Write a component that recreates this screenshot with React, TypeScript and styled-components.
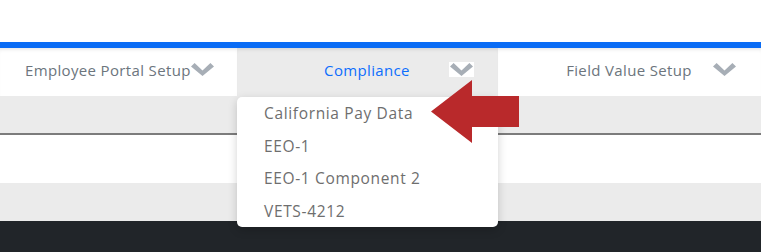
import React from 'react';
import styled, { createGlobalStyle } from 'styled-components';

const GlobalStyle = createGlobalStyle`
  html, body {
    margin: 0;
    padding: 0;
    background: #ffffff;
    font-family: "Open Sans", "Liberation Sans", sans-serif;
  }
`;

const Page = styled.div`
  position: relative;
  width: 761px;
  height: 252px;
  overflow: hidden;
  background: #ffffff;
`;

const TopSpace = styled.div`
  height: 42px;
`;

const BlueBar = styled.div`
  height: 6px;
  background: #0a6cf5;
`;

const NavRow = styled.nav`
  display: grid;
  grid-template-columns: 237px 261px 1fr;
  height: 48px;
  position: relative;
  z-index: 2;
`;

const NavTab = styled.div<{ $active?: boolean; $padLeft: number }>`
  position: relative;
  display: flex;
  align-items: center;
  padding: 0 24px 5px ${(p) => p.$padLeft}px;
  background: ${(p) => (p.$active ? '#ebebeb' : '#ffffff')};
  box-shadow: inset 0 4px 4px -3px rgba(0, 0, 0, 0.12);
`;

const NavLabel = styled.span<{ $active?: boolean }>`
  flex: 1;
  text-align: center;
  font-size: 15px;
  letter-spacing: 0.35px;
  white-space: nowrap;
  color: ${(p) => (p.$active ? '#0d6efd' : '#6c757d')};
`;

const ChevronBox = styled.span<{ $boxed?: boolean }>`
  display: flex;
  align-items: center;
  justify-content: center;
  width: 25px;
  height: 15px;
  background: ${(p) => (p.$boxed ? '#ffffff' : 'transparent')};
`;

const Menu = styled.ul`
  position: absolute;
  top: 49px;
  left: 0;
  width: 261px;
  margin: 0;
  padding: 0;
  list-style: none;
  background: #ffffff;
  border-radius: 5px;
  box-shadow: 0 3px 10px rgba(0, 0, 0, 0.18);
  z-index: 3;
`;

const MenuItem = styled.li`
  height: 32.5px;
  line-height: 32.5px;
  padding-left: 27px;
  font-size: 15.5px;
  letter-spacing: 0.65px;
  color: #6e6e6e;
`;

const Body = styled.div`
  display: flex;
  flex-direction: column;
`;

const Row = styled.div<{ $shade?: boolean; $h: number; $ruled?: boolean }>`
  height: ${(p) => p.$h}px;
  background: ${(p) => (p.$shade ? '#ebebeb' : '#ffffff')};
  border-bottom: ${(p) => (p.$ruled ? '2px solid #7c7c7c' : 'none')};
`;

const Footer = styled.footer`
  height: 31px;
  background: #212529;
`;

const Pointer = styled.svg`
  position: absolute;
  left: 431px;
  top: 80px;
  z-index: 4;
`;

const Chevron = () => (
  <svg width="23" height="13" viewBox="0 0 23 13">
    <polygon points="0,3.6 3.6,0 11.5,7.4 19.4,0 23,3.6 11.5,13" fill="#a7aeb6" />
  </svg>
);

const tabs = [
  { label: 'Employee Portal Setup', pad: 25 },
  { label: 'Compliance', pad: 48, active: true },
  { label: 'Field Value Setup', pad: 48 },
];

const menuItems = ['California Pay Data', 'EEO-1', 'EEO-1 Component 2', 'VETS-4212'];

export default function App() {
  return (
    <Page>
      <GlobalStyle />
      <TopSpace />
      <BlueBar />
      <NavRow>
        {tabs.map((t) => (
          <NavTab key={t.label} $active={t.active} $padLeft={t.pad}>
            <NavLabel $active={t.active}>{t.label}</NavLabel>
            <ChevronBox $boxed={t.active}>
              <Chevron />
            </ChevronBox>
            {t.active && (
              <Menu>
                {menuItems.map((m) => (
                  <MenuItem key={m}>{m}</MenuItem>
                ))}
              </Menu>
            )}
          </NavTab>
        ))}
      </NavRow>
      <Body>
        <Row $shade $h={37} $ruled />
        <Row $h={48} />
        <Row $shade $h={38} />
        <Footer />
      </Body>
      <Pointer width="88" height="64" viewBox="0 0 88 64">
        <polygon points="0,31.5 41,0 41,16 88,16 88,47 41,47 41,63" fill="#b9292b" />
      </Pointer>
    </Page>
  );
}
